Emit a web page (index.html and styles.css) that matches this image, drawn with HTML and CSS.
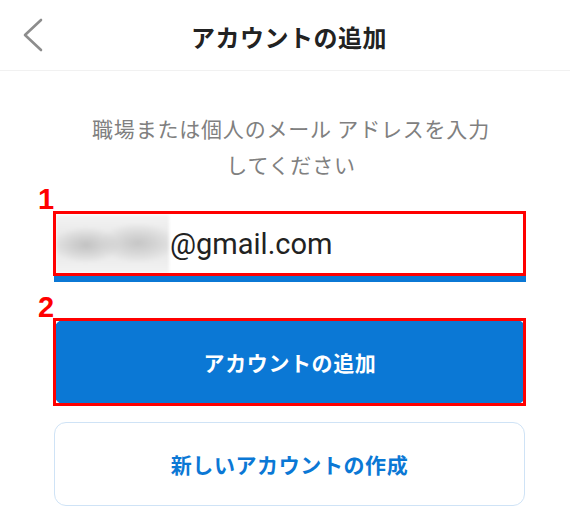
FILE: index.html
```html
<!DOCTYPE html>
<html lang="ja">
<head>
<meta charset="utf-8">
<title>アカウントの追加</title>
<link rel="stylesheet" href="styles.css">
</head>
<body>
<header class="topbar">
  <div class="back">
    <svg width="24" height="40" viewBox="0 0 24 40" aria-hidden="true">
      <polyline points="19,3 3,18 19,33" fill="none" stroke="#8d8d8d" stroke-width="2.6" stroke-linecap="round" stroke-linejoin="round"/>
    </svg>
  </div>
  <h1 class="title">アカウントの追加</h1>
  <div></div>
</header>
<main class="content">
  <p class="lead">職場または個人のメール アドレスを入力<br>してください</p>
  <div class="field">
    <span class="marker">1</span>
    <span class="blur"></span><span class="email">@gmail.com</span>
    <span class="frame frame-field"></span>
  </div>
  <div class="btn-wrap">
    <span class="marker">2</span>
    <button class="btn primary">アカウントの追加</button>
    <span class="frame frame-btn"></span>
  </div>
  <button class="btn secondary">新しいアカウントの作成</button>
</main>
</body>
</html>
```
FILE: styles.css
```css
* { box-sizing: border-box; }
html, body { margin: 0; padding: 0; background: #fff; }
body {
  width: 570px;
  font-family: "Noto Sans CJK JP", "Noto Sans", sans-serif;
}
.topbar {
  height: 71px;
  display: grid;
  grid-template-columns: 1fr auto 1fr;
  align-items: center;
  border-bottom: 1px solid #f1f1f1;
  padding-left: 8px;
}
.back {
  padding-left: 14px;
  padding-top: 3px;
  display: flex;
}
.title {
  margin: 0;
  padding-top: 4px;
  font-size: 24px;
  font-weight: 700;
  letter-spacing: 0.5px;
  color: #222;
  line-height: 32px;
}
.content {
  padding: 0 44px 0 54px;
  display: flex;
  flex-direction: column;
}
.lead {
  margin: 39px 0 0;
  text-align: center;
  font-size: 21px;
  line-height: 36px;
  letter-spacing: 0.8px;
  color: #808080;
  padding-left: 2px;
}
.field {
  position: relative;
  margin-top: 29px;
  height: 71px;
  border-bottom: 6px solid #0b78d5;
  display: flex;
  align-items: center;
  padding-left: 2px;
}
.marker {
  position: absolute;
  left: -16px;
  top: -26px;
  font-family: "Liberation Sans", Arial, sans-serif;
  font-weight: 700;
  font-size: 29px;
  line-height: 28px;
  color: #ff0000;
}
.blur {
  width: 113px;
  height: 58px;
  background:
    radial-gradient(ellipse 34px 18px at 30px 30px, #c2c2c2, rgba(200,200,200,0) 100%),
    radial-gradient(ellipse 38px 20px at 82px 28px, #c6c6c6, rgba(200,200,200,0) 100%),
    linear-gradient(#f3f3f3, #e4e4e4 50%, #f3f3f3);
  filter: blur(1.5px);
}
.email {
  margin-left: 1px;
  font-family: "Roboto", "Liberation Sans", sans-serif;
  font-size: 29px;
  color: #222;
  margin-top: 1px;
}
.frame {
  position: absolute;
  border: 3px solid #ff0000;
  pointer-events: none;
}
.frame-field {
  left: -1px;
  top: 0;
  right: 0;
  height: 65px;
}
.btn-wrap {
  position: relative;
  margin-top: 37px;
}
.frame-btn {
  left: -1px;
  top: -1px;
  right: 0;
  bottom: -1px;
}
.btn {
  display: block;
  width: 100%;
  font-family: "Noto Sans CJK JP", "Noto Sans", sans-serif;
  font-size: 21px;
  font-weight: 700;
  letter-spacing: 0.6px;
  cursor: pointer;
}
.primary {
  height: 86px;
  border: none;
  border-radius: 12px;
  background: #0b78d5;
  color: #fff;
}
.secondary {
  margin-top: 17px;
  height: 84px;
  width: 471px;
  border: 1.5px solid #cfe3f6;
  border-radius: 12px;
  background: #fff;
  color: #0b78d5;
}
```
